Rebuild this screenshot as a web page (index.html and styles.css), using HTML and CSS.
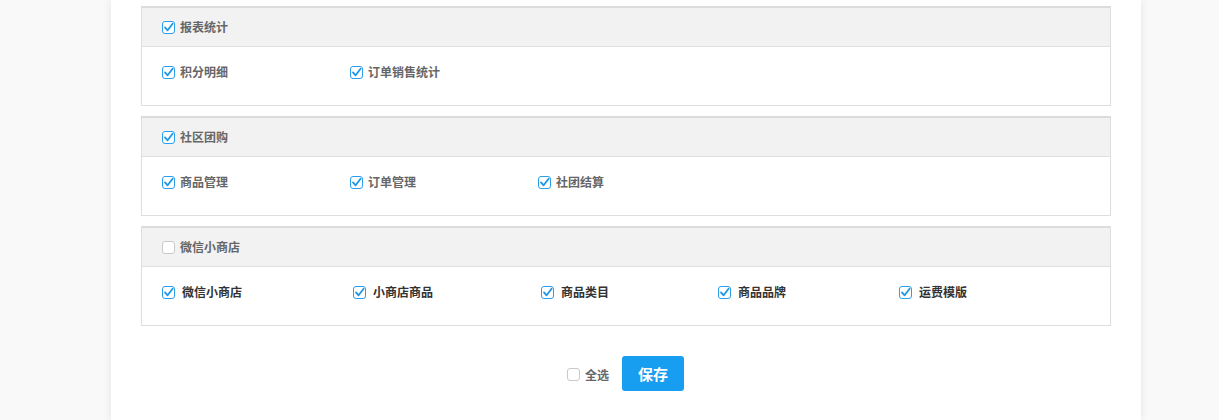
FILE: index.html
```html
<!DOCTYPE html>
<html lang="zh-CN">
<head>
<meta charset="utf-8">
<title>权限设置</title>
<link rel="stylesheet" href="styles.css">
</head>
<body>
<div class="page">
  <div class="panel">
    <div class="panel-head">
      <label class="cb"><svg class="box" viewBox="0 0 13 13"><rect x="0.5" y="0.5" width="12" height="12" rx="2.5" class="on"/><path d="M3 6.4 L5.6 9.3 L10.6 2.8" class="tick"/></svg><span>报表统计</span></label>
    </div>
    <div class="panel-body">
      <label class="cb item"><svg class="box" viewBox="0 0 13 13"><rect x="0.5" y="0.5" width="12" height="12" rx="2.5" class="on"/><path d="M3 6.4 L5.6 9.3 L10.6 2.8" class="tick"/></svg><span>积分明细</span></label>
      <label class="cb item"><svg class="box" viewBox="0 0 13 13"><rect x="0.5" y="0.5" width="12" height="12" rx="2.5" class="on"/><path d="M3 6.4 L5.6 9.3 L10.6 2.8" class="tick"/></svg><span>订单销售统计</span></label>
    </div>
  </div>

  <div class="panel">
    <div class="panel-head">
      <label class="cb"><svg class="box" viewBox="0 0 13 13"><rect x="0.5" y="0.5" width="12" height="12" rx="2.5" class="on"/><path d="M3 6.4 L5.6 9.3 L10.6 2.8" class="tick"/></svg><span>社区团购</span></label>
    </div>
    <div class="panel-body">
      <label class="cb item"><svg class="box" viewBox="0 0 13 13"><rect x="0.5" y="0.5" width="12" height="12" rx="2.5" class="on"/><path d="M3 6.4 L5.6 9.3 L10.6 2.8" class="tick"/></svg><span>商品管理</span></label>
      <label class="cb item"><svg class="box" viewBox="0 0 13 13"><rect x="0.5" y="0.5" width="12" height="12" rx="2.5" class="on"/><path d="M3 6.4 L5.6 9.3 L10.6 2.8" class="tick"/></svg><span>订单管理</span></label>
      <label class="cb item"><svg class="box" viewBox="0 0 13 13"><rect x="0.5" y="0.5" width="12" height="12" rx="2.5" class="on"/><path d="M3 6.4 L5.6 9.3 L10.6 2.8" class="tick"/></svg><span>社团结算</span></label>
    </div>
  </div>

  <div class="panel">
    <div class="panel-head">
      <label class="cb"><svg class="box" viewBox="0 0 13 13"><rect x="0.5" y="0.5" width="12" height="12" rx="2.5" class="off"/></svg><span>微信小商店</span></label>
    </div>
    <div class="panel-body">
      <label class="cb wide"><svg class="box" viewBox="0 0 13 13"><rect x="0.5" y="0.5" width="12" height="12" rx="2.5" class="on"/><path d="M3 6.4 L5.6 9.3 L10.6 2.8" class="tick"/></svg><span>微信小商店</span></label>
      <label class="cb wide"><svg class="box" viewBox="0 0 13 13"><rect x="0.5" y="0.5" width="12" height="12" rx="2.5" class="on"/><path d="M3 6.4 L5.6 9.3 L10.6 2.8" class="tick"/></svg><span>小商店商品</span></label>
      <label class="cb wide"><svg class="box" viewBox="0 0 13 13"><rect x="0.5" y="0.5" width="12" height="12" rx="2.5" class="on"/><path d="M3 6.4 L5.6 9.3 L10.6 2.8" class="tick"/></svg><span>商品类目</span></label>
      <label class="cb wide"><svg class="box" viewBox="0 0 13 13"><rect x="0.5" y="0.5" width="12" height="12" rx="2.5" class="on"/><path d="M3 6.4 L5.6 9.3 L10.6 2.8" class="tick"/></svg><span>商品品牌</span></label>
      <label class="cb wide"><svg class="box" viewBox="0 0 13 13"><rect x="0.5" y="0.5" width="12" height="12" rx="2.5" class="on"/><path d="M3 6.4 L5.6 9.3 L10.6 2.8" class="tick"/></svg><span>运费模版</span></label>
    </div>
  </div>

  <div class="actions">
    <label class="cb all"><svg class="box" viewBox="0 0 13 13"><rect x="0.5" y="0.5" width="12" height="12" rx="2.5" class="off"/></svg><span>全选</span></label>
    <button class="save" type="button">保存</button>
  </div>
</div>
</body>
</html>
```

FILE: styles.css
```css
html, body {
  margin: 0;
  padding: 0;
}
body {
  background: #f9f9f9;
  font-family: "Noto Sans CJK SC", "Noto Sans", sans-serif;
  font-size: 12px;
  height: 420px;
  overflow: hidden;
}
.page {
  margin-left: 111px;
  width: 970px;
  height: 414px;
  padding: 6px 30px 0;
  background: #fff;
  box-shadow: 0 0 8px rgba(0, 0, 0, 0.09);
}
.panel {
  border: 1px solid #dedede;
  border-top: 2px solid #dcdcdc;
  margin-bottom: 10px;
}
.panel-head {
  height: 38px;
  background: #f2f2f2;
  border-bottom: 1px solid #e0e0e0;
  padding: 0 20px;
  display: flex;
  align-items: center;
}
.panel-body {
  height: 58px;
  box-sizing: border-box;
  padding: 17px 20px 0;
  display: flex;
  align-items: flex-start;
}
.cb {
  display: inline-flex;
  align-items: center;
  height: 16px;
  font-weight: bold;
  color: #666;
  line-height: 16px;
  white-space: nowrap;
}
.cb .box {
  width: 13px;
  height: 13px;
  flex: none;
  margin-right: 5px;
}
.item {
  width: 188px;
}
.wide {
  color: #333;
  width: 191px;
}
.wide:nth-child(2) {
  width: 188px;
}
.wide:nth-child(3) {
  width: 177px;
}
.wide:nth-child(4) {
  width: 181px;
}
.wide .box {
  margin-right: 7px;
}
.on {
  fill: #fff;
  stroke: #2b9eea;
  stroke-width: 1;
}
.off {
  fill: #fff;
  stroke: #c9c9c9;
  stroke-width: 1;
}
.tick {
  fill: none;
  stroke: #1e96e6;
  stroke-width: 1.8;
  stroke-linecap: round;
  stroke-linejoin: round;
}
.actions {
  display: flex;
  justify-content: center;
  align-items: center;
  padding-top: 20px;
  padding-right: 4px;
}
.all {
  margin-right: 13px;
  margin-top: 2px;
  margin-left: 3px;
}
.all .box {
  margin-right: 5px;
}
.save {
  width: 62px;
  height: 35px;
  border: none;
  border-radius: 3px;
  background: #179ef0;
  color: #fff;
  font-family: "Noto Sans CJK SC", "Noto Sans", sans-serif;
  font-size: 15px;
  font-weight: bold;
  padding: 0;
  cursor: pointer;
}
```
